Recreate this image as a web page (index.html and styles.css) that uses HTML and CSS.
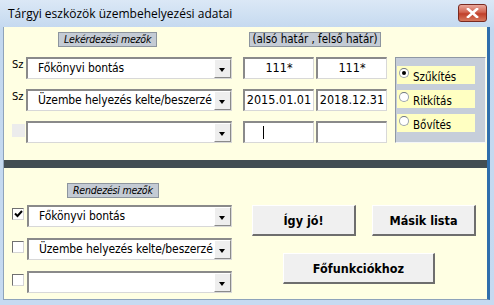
FILE: index.html
```html
<!DOCTYPE html>
<html lang="hu">
<head>
    <meta charset="UTF-8">
    <title>Tárgyi eszközök üzembehelyezési adatai</title>
    <link rel="stylesheet" href="styles.css">
</head>
<body>
    <div class="window">
        <div class="titlebar">
            <span class="title">Tárgyi eszközök üzembehelyezési adatai</span>
            <span class="close">
                <svg width="13" height="10" viewBox="0 0 13 10">
                    <path d="M2 1 L11 9 M11 1 L2 9" stroke="#fff" stroke-width="2.6" stroke-linecap="square"/>
                </svg>
            </span>
        </div>
        <div class="client">
            <div class="query">
                <div class="caption caption-query">Lekérdezési mezők</div>
                <div class="caption caption-range">(alsó határ , felső határ)</div>

                <div class="sz row-1">Sz</div>
                <div class="combo c-combo row-1"><span class="combo-text">Főkönyvi bontás</span><span class="drop"></span></div>
                <div class="textbox c-from row-1">111*</div>
                <div class="textbox c-to row-1">111*</div>

                <div class="sz row-2">Sz</div>
                <div class="combo c-combo row-2"><span class="combo-text">Üzembe helyezés kelte/beszerzé</span><span class="drop"></span></div>
                <div class="textbox c-from row-2">2015.01.01</div>
                <div class="textbox c-to row-2">2018.12.31</div>

                <div class="sz row-3"><span class="sz-empty"></span></div>
                <div class="combo c-combo row-3"><span class="combo-text"></span><span class="drop"></span></div>
                <div class="textbox c-from row-3"><span class="caret"></span></div>
                <div class="textbox c-to row-3"></div>

                <div class="radio-frame">
                    <div class="radio-item"><span class="radio checked"></span>Szűkítés</div>
                    <div class="radio-item"><span class="radio"></span>Ritkítás</div>
                    <div class="radio-item"><span class="radio"></span>Bővítés</div>
                </div>
            </div>

            <div class="separator"></div>

            <div class="sort">
                <div class="caption caption-sort">Rendezési mezők</div>
                <div class="sort-body">
                    <div class="sort-fields">
                        <div class="sort-row">
                            <span class="check">
                                <svg width="9" height="8" viewBox="0 0 9 8"><path d="M1 3.5 L3.5 6 L8 1" stroke="#000" stroke-width="2" fill="none"/></svg>
                            </span>
                            <div class="combo"><span class="combo-text">Főkönyvi bontás</span><span class="drop"></span></div>
                        </div>
                        <div class="sort-row">
                            <span class="check"></span>
                            <div class="combo"><span class="combo-text">Üzembe helyezés kelte/beszerzé</span><span class="drop"></span></div>
                        </div>
                        <div class="sort-row">
                            <span class="check"></span>
                            <div class="combo"><span class="combo-text"></span><span class="drop"></span></div>
                        </div>
                    </div>
                    <div class="buttons">
                        <div class="button-row">
                            <button class="btn">Így jó!</button>
                            <button class="btn">Másik lista</button>
                        </div>
                        <button class="btn btn-wide">Főfunkciókhoz</button>
                    </div>
                </div>
            </div>
        </div>
    </div>
</body>
</html>
```

FILE: styles.css
```css
body {
    margin: 0;
    font-family: "DejaVu Sans Condensed", "Liberation Sans", sans-serif;
}
.window {
    width: 494px;
    height: 305px;
    box-sizing: border-box;
    display: flex;
    flex-direction: column;
    background: linear-gradient(#dbe8f6, #c3d8ef 30px, #c6daf1);
    padding: 0 0 5px 3px;
}
.titlebar {
    height: 27px;
    display: flex;
    align-items: flex-start;
    justify-content: space-between;
    padding-right: 7px;
}
.title {
    font-family: "Open Sans", "Noto Sans", sans-serif;
    font-size: 12px;
    color: #000;
    margin: 5px 0 0 5px;
}
.close {
    width: 27px;
    height: 16px;
    margin-top: 4px;
    border: 1px solid #7a2a20;
    border-radius: 3px;
    background: linear-gradient(#e9a99c, #d26450 45%, #c0402b 55%, #d77a5e);
    display: flex;
    align-items: center;
    justify-content: center;
}
.client {
    flex: 1;
    background: #ffffe3;
    border-left: 1px solid #8ea3bb;
    border-right: 3px solid #2f6eac;
    border-bottom: 1px solid #8ea3bb;
    margin-right: 4px;
}

/* captions */
.caption {
    height: 15px;
    box-sizing: border-box;
    background: #c4cbd4;
    border: 1px solid #8d959e;
    font-size: 11px;
    line-height: 13px;
    color: #000;
    padding: 0 3px;
    white-space: nowrap;
}
.caption-query, .caption-sort {
    font-style: italic;
    font-size: 10.5px;
    letter-spacing: -0.2px;
    justify-self: start;
    padding: 0 5px;
}
.caption-query {
    grid-column: 2;
    grid-row: 1;
    margin-left: 32px;
}
.caption-range {
    grid-column: 4 / 7;
    grid-row: 1;
    justify-self: center;
    font-size: 11.5px;
    padding: 0 2px;
}

/* query grid */
.query {
    display: grid;
    grid-template-columns: 22px 206px 11px 71px 2px 71px 8px 91px;
    grid-template-rows: 15px 22px 22px 22px;
    row-gap: 10px;
    padding-top: 5px;
}
.row-1 { grid-row: 2; }
.row-2 { grid-row: 3; }
.row-3 { grid-row: 4; }
.caption-query, .caption-range { margin-bottom: -3px; }
.sz {
    grid-column: 1;
    font-size: 11px;
    padding: 1px 0 0 8px;
}
.sz-empty {
    display: block;
    width: 13px;
    height: 13px;
    background: #ececec;
    margin: 2px 0 0 0;
}
.c-combo { grid-column: 2; }
.c-from { grid-column: 4; }
.c-to { grid-column: 6; }

.combo {
    height: 22px;
    box-sizing: border-box;
    background: #fff;
    border-top: 2px solid #8a8a8a;
    border-left: 2px solid #8a8a8a;
    border-right: 1px solid #d8d8d8;
    border-bottom: 1px solid #d8d8d8;
    display: flex;
    align-items: stretch;
    overflow: hidden;
}
.combo-text {
    flex: 1;
    font-size: 12px;
    letter-spacing: -0.1px;
    line-height: 18px;
    padding-left: 10px;
    white-space: nowrap;
    overflow: hidden;
}
.drop {
    width: 15px;
    flex: none;
    background: #eeeeee;
    border-left: 1px solid #fff;
    border-top: 1px solid #fff;
    border-right: 1px solid #8a8a8a;
    border-bottom: 1px solid #8a8a8a;
    position: relative;
}
.drop::after {
    content: "";
    position: absolute;
    left: 4px;
    top: 8px;
    border-left: 3.5px solid transparent;
    border-right: 3.5px solid transparent;
    border-top: 4px solid #000;
}
.textbox {
    height: 22px;
    box-sizing: border-box;
    background: #fff;
    border-top: 2px solid #8a8a8a;
    border-left: 2px solid #8a8a8a;
    border-right: 1px solid #d8d8d8;
    border-bottom: 1px solid #d8d8d8;
    font-size: 12.5px;
    line-height: 18px;
    text-align: center;
    white-space: nowrap;
    overflow: hidden;
}
.caret {
    display: inline-block;
    width: 1px;
    height: 13px;
    background: #000;
    margin: 3px 0 0 0;
    vertical-align: top;
    position: relative;
    left: -16px;
}

/* option group */
.radio-frame {
    grid-column: 8;
    grid-row: 2 / 5;
    background: #c6ceda;
    border: 1px solid #8f98a4;
    border-right-color: #f4f6f8;
    border-bottom-color: #f4f6f8;
    display: flex;
    flex-direction: column;
    gap: 6px;
    padding: 8px 0 0 1px;
}
.radio-item {
    width: 78px;
    height: 18px;
    background: #ffffc2;
    font-size: 11.5px;
    display: flex;
    align-items: flex-start;
    line-height: 22px;
}
.radio {
    width: 10px;
    height: 10px;
    box-sizing: border-box;
    border-radius: 50%;
    background: #fff;
    border: 1px solid #9aa3ad;
    border-top-color: #6f7880;
    margin: 2px 4px 0 2px;
    flex: none;
    position: relative;
}
.radio.checked::after {
    content: "";
    position: absolute;
    left: 2px;
    top: 2px;
    width: 4px;
    height: 4px;
    border-radius: 50%;
    background: #000;
}

.separator {
    height: 8px;
    background: #424d52;
    margin-top: 17px;
}

/* sort section */
.sort { padding-top: 11px; }
.caption-sort {
    display: inline-block;
    margin-left: 63px;
}
.sort-body {
    display: flex;
    margin-top: 7px;
}
.sort-fields {
    display: flex;
    flex-direction: column;
    gap: 11px;
    padding-left: 8px;
    width: 220px;
}
.sort-row {
    display: flex;
    gap: 3px;
    align-items: flex-start;
}
.sort-row .combo { width: 205px; }
.check {
    width: 12px;
    height: 12px;
    box-sizing: border-box;
    margin-top: 3px;
    background: #fff;
    border-top: 1px solid #707070;
    border-left: 1px solid #707070;
    border-right: 1px solid #d6d6d6;
    border-bottom: 1px solid #d6d6d6;
    display: flex;
    align-items: center;
    justify-content: center;
}
.buttons {
    margin-left: 20px;
    display: flex;
    flex-direction: column;
    gap: 17px;
}
.button-row {
    display: flex;
    gap: 16px;
}
.btn {
    width: 104px;
    height: 31px;
    font-family: "DejaVu Sans Condensed", "Liberation Sans", sans-serif;
    font-weight: bold;
    font-size: 12.5px;
    color: #000;
    background: #f0f0f0;
    border-top: 1px solid #fff;
    border-left: 1px solid #fff;
    border-right: 2px solid #6e6e6e;
    border-bottom: 2px solid #6e6e6e;
    padding: 0;
}
.btn-wide {
    width: 152px;
    margin-left: 31px;
}
```
